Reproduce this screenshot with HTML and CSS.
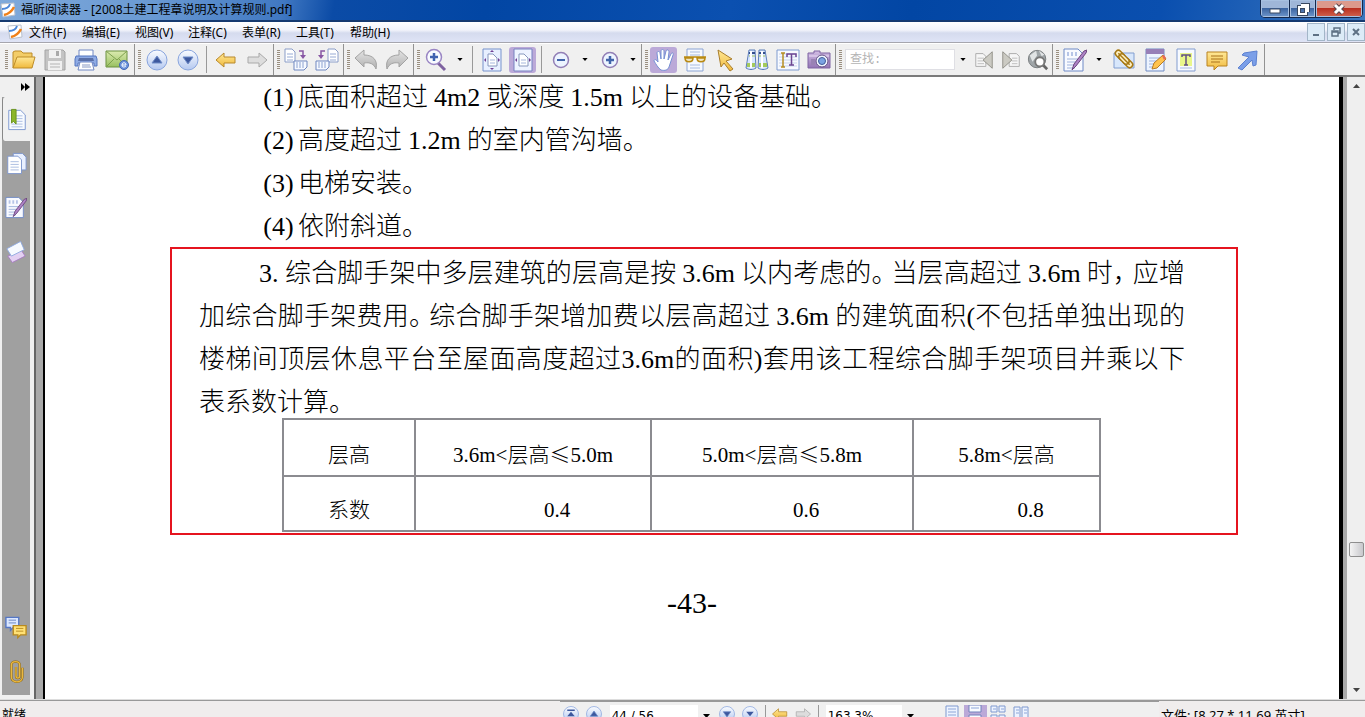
FILE: index.html
```html
<!DOCTYPE html>
<html lang="zh-CN">
<head>
<meta charset="utf-8">
<title>福昕阅读器 - [2008土建工程章说明及计算规则.pdf]</title>
<link rel="stylesheet" href="styles.css">
</head>
<body>
<svg class="defs" aria-hidden="true">
  <defs>
    <linearGradient id="gBlue" x1="0" y1="0" x2="0" y2="1"><stop offset="0" stop-color="#fafcff"/><stop offset="1" stop-color="#b4c8f0"/></linearGradient>
    <linearGradient id="gGold" x1="0" y1="0" x2="0" y2="1"><stop offset="0" stop-color="#ffe896"/><stop offset="1" stop-color="#f0b93c"/></linearGradient>
    <linearGradient id="gGray" x1="0" y1="0" x2="0" y2="1"><stop offset="0" stop-color="#e4e4e4"/><stop offset="1" stop-color="#b0b0b0"/></linearGradient>
    <linearGradient id="gPurple" x1="0" y1="0" x2="0" y2="1"><stop offset="0" stop-color="#d2bde4"/><stop offset="1" stop-color="#9274b4"/></linearGradient>
    <linearGradient id="gGreen" x1="0" y1="0" x2="0" y2="1"><stop offset="0" stop-color="#dcebb0"/><stop offset="1" stop-color="#98c060"/></linearGradient>
  </defs>
  <symbol id="logo" viewBox="0 0 16 16"><path d="M1 2l13-1 1 12-12 2z" fill="#fff" stroke="#b8c0cc"/><path d="M2 7c5 0 7-2 8-5" fill="none" stroke="#4a86d8" stroke-width="2"/><path d="M4 13c5-1 8-4 10-8" fill="none" stroke="#f08018" stroke-width="2.5"/></symbol>
  <symbol id="open" viewBox="0 0 24 24"><path d="M1 20V4l2-1h6l2 2h9v4" fill="#f3cd68" stroke="#bd8c28"/><path d="M1 20L5 9h18l-3 11z" fill="url(#gGold)" stroke="#bd8c28"/></symbol>
  <symbol id="save" viewBox="0 0 24 24"><path d="M2 2h18l2 2v18H2z" fill="#c4c4c4" stroke="#a4a4a4"/><path d="M6 2h12v8H6z" fill="#f0f0f0"/><path d="M13 3h3v5h-3z" fill="#a9a9a9"/><path d="M5 13h14v9H5z" fill="#f0f0f0"/><path d="M7 16h10M7 19h10" stroke="#b4b4b4"/></symbol>
  <symbol id="print" viewBox="0 0 24 24"><path d="M5 8V2h14v6" fill="#fff" stroke="#7088c4"/><path d="M2 8h20l1 3v7h-3v-3H4v3H1v-7z" fill="#8fabe4" stroke="#5577c0"/><path d="M5 10h14l1 3H4z" fill="#5a70a8"/><path d="M6 14h12l2 8H4z" fill="#fff" stroke="#7088c4"/><path d="M8 17h8M8 19h9" stroke="#8899c4"/></symbol>
  <symbol id="mail" viewBox="0 0 24 24"><path d="M1 3h21v16H1z" fill="url(#gGreen)" stroke="#6b9040"/><path d="M1 3l11 9L22 3M1 19l8-8M14 11l8 8" fill="none" stroke="#7da04e"/><circle cx="19" cy="17" r="4.500" fill="#6d94dc" stroke="#4468b4"/><path d="M17 17h4c0-3-4-3-4 0s3 2 4 1" fill="none" stroke="#fff"/></symbol>
  <symbol id="up" viewBox="0 0 24 24"><circle cx="12" cy="12" r="10" fill="url(#gBlue)" stroke="#89a5de"/><path d="M7 15l5-7 5 7z" fill="#3d589e" stroke="#6f8cc8"/></symbol>
  <symbol id="down" viewBox="0 0 24 24"><circle cx="12" cy="12" r="10" fill="url(#gBlue)" stroke="#89a5de"/><path d="M7 9l5 7 5-7z" fill="#3d589e" stroke="#6f8cc8"/></symbol>
  <symbol id="first" viewBox="0 0 24 24"><circle cx="12" cy="12" r="10" fill="url(#gBlue)" stroke="#89a5de"/><path d="M7 6h10v2H7zM7 15l5-6 5 6z" fill="#3d589e"/></symbol>
  <symbol id="last" viewBox="0 0 24 24"><circle cx="12" cy="12" r="10" fill="url(#gBlue)" stroke="#89a5de"/><path d="M7 17h10v2H7zM7 9l5 6 5-6z" fill="#3d589e"/></symbol>
  <symbol id="back" viewBox="0 0 24 24"><path d="M2 12l8-7v4h11v6H10v4z" fill="url(#gGold)" stroke="#b8892c"/></symbol>
  <symbol id="forward" viewBox="0 0 24 24"><path d="M22 12l-8-7v4H3v6h11v4z" fill="#ddd" stroke="#a9a9a9"/></symbol>
  <symbol id="copyr" viewBox="0 0 24 24"><path d="M1 1h7l3 3v10H1z" fill="#fff" stroke="#8a9dc8"/><path d="M3 6h6M3 9h6M3 12h6" stroke="#98abd4"/><path d="M15 3h4v5" fill="none" stroke="#8857a4" stroke-width="1.500"/><path d="M16 7h6l-3 4z" fill="#8857a4"/><path d="M10 13h13v6l-3 3H10z" fill="#f6f9ff" stroke="#6f87c0"/><path d="M13 14v6M16 14v6M19 14v6" stroke="#8ca2d0"/></symbol>
  <symbol id="copyl" viewBox="0 0 24 24"><path d="M13 1h7l3 3v10H13z" fill="#fff" stroke="#8a9dc8"/><path d="M15 6h6M15 9h6M15 12h6" stroke="#98abd4"/><path d="M10 3H6v5" fill="none" stroke="#8857a4" stroke-width="1.500"/><path d="M3 7h6l-3 4z" fill="#8857a4"/><path d="M1 13h13v6l-3 3H1z" fill="#f6f9ff" stroke="#6f87c0"/><path d="M4 14v6M7 14v6M10 14v6" stroke="#8ca2d0"/></symbol>
  <symbol id="undo" viewBox="0 0 24 24"><path d="M1 10l9-8v5c9 0 14 5 12 14-2-5-6-7-12-6v4z" fill="url(#gGray)" stroke="#a3a3a3"/></symbol>
  <symbol id="redo" viewBox="0 0 24 24"><path d="M23 10l-9-8v5C5 7 0 12 2 21c2-5 6-7 12-6v4z" fill="url(#gGray)" stroke="#a3a3a3"/></symbol>
  <symbol id="zoom" viewBox="0 0 24 24"><path d="M14 15l7 7" stroke="#7e62a0" stroke-width="3"/><circle cx="10" cy="9" r="7.500" fill="#f8fbff" stroke="#9a86c4" stroke-width="1.500"/><path d="M6 9h8M10 5v8" stroke="#4063b0" stroke-width="2.500"/></symbol>
  <symbol id="fitpage" viewBox="0 0 24 24"><path d="M3 1h18v22H3z" fill="#e8f0ff" stroke="#7792cc"/><path d="M8 6h5l4 4v8H8z" fill="#fff" stroke="#8797bd"/><path d="M10 12h5M10 15h5" stroke="#a6b7dc"/><path d="M12 2l2 2h-4zM12 22l2-2h-4zM4 12l2-2v4zM20 12l-2-2v4z" fill="#714094"/></symbol>
  <symbol id="fitwidth" viewBox="0 0 24 24"><path d="M3 1h18v22H3z" fill="#eef3ff" stroke="#7781c0"/><path d="M8 6h5l4 4v8H8z" fill="#fff" stroke="#8797bd"/><path d="M10 12h5M10 15h5" stroke="#a6b7dc"/><path d="M4 12l2-2v4zM20 12l-2-2v4z" fill="#714094"/></symbol>
  <symbol id="minus" viewBox="0 0 24 24"><circle cx="12" cy="12" r="7.500" fill="#edf4ff" stroke="#927fb6" stroke-width="1.500"/><path d="M8 12h8" stroke="#4164aa" stroke-width="2"/></symbol>
  <symbol id="plus" viewBox="0 0 24 24"><circle cx="12" cy="12" r="7.500" fill="#edf4ff" stroke="#927fb6" stroke-width="1.500"/><path d="M8 12h8M12 8v8" stroke="#4164aa" stroke-width="2.500"/></symbol>
  <symbol id="hand" viewBox="0 0 24 24"><path d="M9 22C6 20 4 16 2 13c0-2 2-2 4 1L5 5c0-2 3-2 3 0l1 6V3c0-2 3-2 3 0v8l2-8c1-2 3-1 3 1l-1 8 3-6c1-2 3-1 2 1l-4 12c-1 3-4 4-8 3z" fill="#fff" stroke="#7690d4"/></symbol>
  <symbol id="read" viewBox="0 0 24 24"><path d="M4 1h16v22H4z" fill="#f6f9ff" stroke="#8ba4d4"/><path d="M7 4h10M7 7h10M7 17h10M7 20h10" stroke="#a9bce0"/><path d="M1 9h22M2 10c0 5 8 5 8 0zM14 10c0 5 8 5 8 0z" fill="#efe6c5" stroke="#b98912" stroke-width="1.500"/></symbol>
  <symbol id="cursor" viewBox="0 0 24 24"><path d="M4 2l14 9-6 2 7 8-3 2-6-8-3 4z" fill="url(#gGold)" stroke="#a97d2c"/></symbol>
  <symbol id="bino" viewBox="0 0 24 24"><path d="M4 2h6l1 18c-3 2-7 2-10 0zM14 2h6l3 18c-3 2-7 2-10 0z" fill="#d8e6ff" stroke="#5b7cb7"/><path d="M4 5h6M14 5h6" stroke="#344e8c" stroke-width="2"/><path d="M2 17h8M14 17h8" stroke="#a4ca5c" stroke-width="4"/><path d="M4 8h6M14 8h6" stroke="#a4ca5c"/><path d="M6 3v17M17 3v17" stroke="#fff" stroke-width="2"/></symbol>
  <symbol id="textsel" viewBox="0 0 24 24"><path d="M1 2h22v20H1z" fill="#f8faff" stroke="#7e9bd0"/><path d="M3 6h18M3 9h18M3 12h18M3 15h18M3 18h18" stroke="#c7d4ed"/><path d="M5 5h4M5 19h4M7 5v14" stroke="#b78e22" stroke-width="1.500"/><path d="M11 9V6h9v3M15.500 6v11M13 17h5" fill="none" stroke="#6c4692" stroke-width="1.500"/></symbol>
  <symbol id="camera" viewBox="0 0 24 24"><path d="M1 5h6V3h6v2h10v15H1z" fill="url(#gPurple)" stroke="#7f64a3"/><path d="M2 8h20" stroke="#eadcf5"/><path d="M4 11h4v6H4z" fill="#9982b4"/><circle cx="15" cy="13" r="6" fill="#eef5ff" stroke="#645083"/><circle cx="15" cy="13" r="3.500" fill="#7aa3e2" stroke="#415c98"/></symbol>
  <symbol id="prev" viewBox="0 0 24 24"><path d="M3 5h8l3 3v11H3z" fill="#f6f6f6" stroke="#aaa"/><path d="M5 10h7M5 13h7M5 16h7" stroke="#bbb"/><path d="M21 3v18l-10-9z" fill="#cbcac3" stroke="#8e8d86"/></symbol>
  <symbol id="next" viewBox="0 0 24 24"><path d="M10 5h8l3 3v11H10z" fill="#f6f6f6" stroke="#aaa"/><path d="M13 10h6M13 13h6M13 16h6" stroke="#bbb"/><path d="M3 3v18l10-9z" fill="#cbcac3" stroke="#8e8d86"/></symbol>
  <symbol id="web" viewBox="0 0 24 24"><circle cx="11" cy="11" r="9.500" fill="#9fa5a8" stroke="#737779"/><path d="M3 7l7-5 1 5-5 7zM13 2l6 4-3 2z" fill="#e1e4e5"/><path d="M17 17l5 5" stroke="#666" stroke-width="3"/><circle cx="14" cy="14" r="5" fill="#fff" stroke="#777" stroke-width="2"/></symbol>
  <symbol id="sign" viewBox="0 0 24 24"><path d="M1 1h14l5 5v17H1z" fill="#f8faff" stroke="#6f8ac6"/><path d="M4 4h2v4H4zM8 4h2v4H8zM12 4h2v4h-2z" fill="#b6c5e7"/><path d="M4 11h12M4 14h10M4 17h8M4 20h8" stroke="#9eb2dc"/><path d="M9 22l2-6L21 3l3-1-1 3-10 13z" fill="#ad83c6" stroke="#6d467e"/></symbol>
  <symbol id="link" viewBox="0 0 24 24"><path d="M2 5h20v15H2z" fill="#d8e7fb" stroke="#819ed0"/><g fill="#fff2c5" stroke="#a77913" stroke-width="1.500" transform="rotate(45 12 11)"><rect x="1" y="8" width="11" height="6" rx="3"/><rect x="12" y="8" width="11" height="6" rx="3"/><rect x="6" y="8" width="12" height="6" rx="3"/><path d="M4 11h16"/></g></symbol>
  <symbol id="pencil" viewBox="0 0 24 24"><path d="M3 1h18v22H3z" fill="#edf4ff" stroke="#6f8bc2"/><path d="M3 1h18v5H3z" fill="#9780b8"/><path d="M6 10h12M6 13h12M6 16h9M6 19h7" stroke="#9eb2dc"/><path d="M9 21l2-6 9-8 3 4-9 9z" fill="#ffc34d" stroke="#b77c26"/><path d="M19 8l2-1 2 3-2 2z" fill="#e76a58"/></symbol>
  <symbol id="typew" viewBox="0 0 24 24"><path d="M3 1h18v22H3z" fill="#f7faff" stroke="#829cd0"/><path d="M6 5h12v13H6z" fill="#e9f78b"/><path d="M8 9V7h8v2M12 7v10M10 17h4" fill="none" stroke="#615082" stroke-width="1.500"/><path d="M6 20h12" stroke="#a9bce0"/></symbol>
  <symbol id="note" viewBox="0 0 24 24"><path d="M2 4h20v14H13l-4 4v-4H2z" fill="url(#gGold)" stroke="#b9821e"/><path d="M6 8h12M6 11h12M6 14h9" stroke="#a9731c"/></symbol>
  <symbol id="arrow" viewBox="0 0 24 24"><path d="M2 20L13 9 6 7l2-2 13-2-1 14-3 1-1-6L6 22z" fill="#7b9fe8" stroke="#5b80d0"/></symbol>
  <symbol id="bookmark" viewBox="0 0 24 24"><path d="M3 2h13l5 5v16H3z" fill="#f8fbff" stroke="#7894ce"/><path d="M6 8h12M6 11h12M6 14h12M6 17h12M6 20h12" stroke="#a6badf"/><path d="M6 1h5v16l-3-3-2 2z" fill="#8bb62a" stroke="#68901d"/></symbol>
  <symbol id="pages" viewBox="0 0 24 24"><path d="M9 1h10l4 4v14H9z" fill="#e9f0ff" stroke="#7b94cd"/><path d="M3 4h11l4 4v15H3z" fill="#fff" stroke="#7b94cd"/><path d="M6 10h9M6 13h9M6 16h9M6 19h9" stroke="#a6badf"/></symbol>
  <symbol id="layers" viewBox="0 0 24 24"><path d="M3 17l15-6 4 6-14 7z" fill="#e3d0f2" stroke="#a67cc1"/><path d="M2 9l15-8 4 9-14 7z" fill="#f7faff" stroke="#8ea9df"/></symbol>
  <symbol id="comments" viewBox="0 0 24 24"><path d="M1 1h14v11H9l-3 3v-3H1z" fill="#dbe7ff" stroke="#5577c6" stroke-width="1.500"/><path d="M4 4h8M4 7h8" stroke="#6482bf"/><path d="M9 10h14v10h-6l-3 3v-3H9z" fill="#ffe176" stroke="#b88a1f" stroke-width="1.500"/><path d="M12 13h8M12 16h8" stroke="#b88a1f"/></symbol>
  <symbol id="clip" viewBox="0 0 24 24"><path d="M12 7v10c0 3 4 3 4 0V5c0-5-9-5-9 0v13c0 7 12 7 12 0V8" fill="none" stroke="#8c6510" stroke-width="2.500"/><path d="M12 7v10c0 3 4 3 4 0V5c0-5-9-5-9 0v13c0 7 12 7 12 0V8" fill="none" stroke="#eab83f" stroke-width="1.500"/></symbol>
  <symbol id="tri" viewBox="0 0 7 4"><path d="M0 0h7L3.500 4z"/></symbol>
  <symbol id="single" viewBox="0 0 16 18"><path d="M2 1h12v16H2z" fill="#edf3ff" stroke="#7f99cf"/><path d="M4 4h8M4 7h8M4 10h8" stroke="#8da6d8"/></symbol>
  <symbol id="cont" viewBox="0 0 16 18"><path d="M2 0h12v7H2zM2 10h12v8H2z" fill="#f8fbff" stroke="#7381bb"/><path d="M4 3h8M4 13h8" stroke="#8da6d8"/></symbol>
  <symbol id="facing" viewBox="0 0 16 18"><path d="M1 2h6v14H1zM9 2h6v14H9z" fill="#edf3ff" stroke="#7f99cf"/><path d="M3 5h3M3 8h3M11 5h3M11 8h3" stroke="#8da6d8"/></symbol>
  <symbol id="quad" viewBox="0 0 16 18"><path d="M1 1h6v6H1zM9 1h6v6H9zM1 10h6v7H1zM9 10h6v7H9z" fill="#edf3ff" stroke="#7f99cf"/><path d="M3 4h3M11 4h3" stroke="#8da6d8"/></symbol>
</svg>

<div class="window">
  <header class="titlebar">
    <svg class="logo"><use href="#logo"/></svg>
    <h1 class="title">福昕阅读器 - [2008土建工程章说明及计算规则.pdf]</h1>
    <div class="winbtns">
      <button class="wb" aria-label="最小化"><svg width="14" height="14" viewBox="0 0 14 14"><path d="M2 7h10v4H2z" fill="#fff" stroke="#3c4c66"/></svg></button>
      <button class="wb wb-mid" aria-label="还原"><svg width="14" height="14" viewBox="0 0 14 14"><path d="M5 3h7v7M3 5h7v7H3z" fill="none" stroke="#38475f" stroke-width="4"/><path d="M5 3h7v7M3 5h7v7H3z" fill="none" stroke="#fff" stroke-width="2"/></svg></button>
      <button class="wb wb-close" aria-label="关闭"><svg width="14" height="14" viewBox="0 0 14 14"><path d="M3 3l8 8M11 3l-8 8" stroke="#58444c" stroke-width="5"/><path d="M3 3l8 8M11 3l-8 8" stroke="#fff" stroke-width="3"/></svg></button>
    </div>
  </header>

  <nav class="menubar">
    <svg class="logo"><use href="#logo"/></svg>
    <button class="menu">文件(F)</button><button class="menu">编辑(E)</button><button class="menu">视图(V)</button><button class="menu menu-w">注释(C)</button><button class="menu menu-w">表单(R)</button><button class="menu menu-w">工具(T)</button><button class="menu menu-w">帮助(H)</button>
    <div class="docbtns">
      <button class="db" aria-label="最小化文档"><svg width="10" height="10" viewBox="0 0 10 10"><path d="M2 8h6" stroke="#5e7184" stroke-width="2"/></svg></button>
      <button class="db" aria-label="还原文档"><svg width="10" height="10" viewBox="0 0 10 10"><path d="M3 3V1h6v5H7M1 4h6v5H1zM1 5h6" fill="none" stroke="#5e7184" stroke-width="1.500"/></svg></button>
      <button class="db" aria-label="关闭文档"><svg width="10" height="10" viewBox="0 0 10 10"><path d="M2 2l6 6M8 2l-6 6" stroke="#5e7184" stroke-width="2"/></svg></button>
    </div>
  </nav>

  <div class="toolbar">
    <div class="group"><i class="grip"></i><button class="tool" aria-label="打开"><svg><use href="#open"/></svg></button><button class="tool" aria-label="保存"><svg><use href="#save"/></svg></button><button class="tool" aria-label="打印"><svg><use href="#print"/></svg></button><button class="tool" aria-label="邮件"><svg><use href="#mail"/></svg></button></div>
    <div class="group"><i class="grip"></i><button class="tool" aria-label="上一页"><svg><use href="#up"/></svg></button><button class="tool" aria-label="下一页"><svg><use href="#down"/></svg></button><i class="rule"></i><button class="tool" aria-label="后退"><svg><use href="#back"/></svg></button><button class="tool" aria-label="前进"><svg><use href="#forward"/></svg></button></div>
    <div class="group"><i class="grip"></i><button class="tool" aria-label="向右旋转"><svg><use href="#copyr"/></svg></button><button class="tool" aria-label="向左旋转"><svg><use href="#copyl"/></svg></button></div>
    <div class="group"><i class="grip"></i><button class="tool" aria-label="撤销"><svg><use href="#undo"/></svg></button><button class="tool" aria-label="重做"><svg><use href="#redo"/></svg></button></div>
    <div class="group"><i class="grip"></i><button class="tool" aria-label="缩放工具"><svg><use href="#zoom"/></svg></button><button class="drop" aria-label="缩放选项"><svg><use href="#tri"/></svg></button><i class="rule"></i><button class="tool" aria-label="适合页面"><svg><use href="#fitpage"/></svg></button><button class="tool on" aria-label="适合宽度"><svg><use href="#fitwidth"/></svg></button><i class="rule"></i><button class="tool" aria-label="缩小"><svg><use href="#minus"/></svg></button><button class="drop" aria-label="缩小选项"><svg><use href="#tri"/></svg></button><button class="tool" aria-label="放大"><svg><use href="#plus"/></svg></button><button class="drop drop-end" aria-label="放大选项"><svg><use href="#tri"/></svg></button></div>
    <div class="group"><i class="grip"></i><button class="tool on" aria-label="手型工具"><svg><use href="#hand"/></svg></button><button class="tool" aria-label="阅读模式"><svg><use href="#read"/></svg></button><button class="tool" aria-label="选择标注"><svg><use href="#cursor"/></svg></button><button class="tool" aria-label="查找"><svg><use href="#bino"/></svg></button><button class="tool" aria-label="选择文本"><svg><use href="#textsel"/></svg></button><button class="tool" aria-label="快照"><svg><use href="#camera"/></svg></button></div>
    <div class="group"><i class="grip"></i><input class="search" type="text" placeholder="查找:" aria-label="查找文本"><button class="drop drop-end" aria-label="查找选项"><svg><use href="#tri"/></svg></button><button class="tool tool-s" aria-label="查找上一个"><svg><use href="#prev"/></svg></button><button class="tool tool-s" aria-label="查找下一个"><svg><use href="#next"/></svg></button><button class="tool tool-s" aria-label="网络搜索"><svg><use href="#web"/></svg></button></div>
    <div class="group"><i class="grip"></i><button class="tool" aria-label="签名"><svg><use href="#sign"/></svg></button><button class="drop" aria-label="签名选项"><svg><use href="#tri"/></svg></button><button class="tool" aria-label="链接"><svg><use href="#link"/></svg></button><button class="tool" aria-label="编辑表单"><svg><use href="#pencil"/></svg></button><button class="tool" aria-label="打字机"><svg><use href="#typew"/></svg></button><button class="tool" aria-label="注释"><svg><use href="#note"/></svg></button><button class="tool" aria-label="箭头"><svg><use href="#arrow"/></svg></button></div>
  </div>

  <div class="workspace">
    <aside class="side">
      <button class="expand" aria-label="展开面板"><svg width="9" height="8" viewBox="0 0 9 8"><path d="M0 0l4 4-4 4zM4 0l5 4-5 4z"/></svg></button>
      <div class="tabs">
        <button class="tab tab-on" aria-label="书签"><svg><use href="#bookmark"/></svg></button>
        <button class="tab" aria-label="页面"><svg><use href="#pages"/></svg></button>
        <button class="tab" aria-label="签名面板"><svg><use href="#sign"/></svg></button>
        <button class="tab" aria-label="图层"><svg><use href="#layers"/></svg></button>
        <span class="fill"></span>
        <button class="tab" aria-label="注释面板"><svg><use href="#comments"/></svg></button>
        <button class="tab" aria-label="附件"><svg><use href="#clip"/></svg></button>
      </div>
    </aside>
    <main class="page">
      <article class="content">
        <div class="list">
          <p class="line item"><span class="lat mark">(1)</span>底面积超过<span class="lat gap">4m2</span>或深度<span class="lat gap">1.5m</span>以上的设备基础。</p>
          <p class="line item"><span class="lat mark">(2)</span>高度超过<span class="lat gap">1.2m</span>的室内管沟墙。</p>
          <p class="line item"><span class="lat mark">(3)</span>电梯安装。</p>
          <p class="line item"><span class="lat mark">(4)</span>依附斜道。</p>
        </div>
        <section class="marked">
          <p class="line item full"><span class="lat num">3.</span>综合脚手架中多层建筑的层高是按<span class="lat gap">3.6m</span>以内考虑的<span class="punct">。</span>当层高超过<span class="lat gap">3.6m</span>时<span class="punct">，</span>应增</p>
          <p class="line full">加综合脚手架费用<span class="punct">。</span>综合脚手架增加费以层高超过<span class="lat gap">3.6m</span>的建筑面积<span class="lat">(</span>不包括单独出现的</p>
          <p class="line full">楼梯间顶层休息平台至屋面高度超过<span class="lat">3.6m</span>的面积<span class="lat">)</span>套用该工程综合脚手架项目并乘以下</p>
          <p class="line">表系数计算。</p>
          <table class="factors">
            <colgroup><col class="c1"><col class="c2"><col class="c3"><col class="c4"></colgroup>
            <tr><th scope="row">层高</th><td><span class="tl">3.6m&lt;</span>层高≤<span class="tl">5.0m</span></td><td><span class="tl">5.0m&lt;</span>层高≤<span class="tl">5.8m</span></td><td><span class="tl">5.8m&lt;</span>层高</td></tr>
            <tr class="vals"><th scope="row">系数</th><td><span class="tl">0.4</span></td><td><span class="tl">0.6</span></td><td><span class="tl">0.8</span></td></tr>
          </table>
        </section>
        <p class="folio">-43-</p>
      </article>
    </main>
    <div class="scroll">
      <button class="sb" aria-label="向上滚动"><svg width="7" height="4" viewBox="0 0 7 4"><path d="M0 4h7L3.500 0z" fill="#444"/></svg></button>
      <span class="track-a"></span><span class="thumb"></span><span class="track-b"></span>
      <button class="sb" aria-label="向下滚动"><svg width="7" height="4"><use href="#tri" fill="#444"/></svg></button>
    </div>
  </div>

  <footer class="status">
    <span class="ready">就绪</span>
    <div class="pager">
      <button class="sbtn" aria-label="首页"><svg><use href="#first"/></svg></button><button class="sbtn" aria-label="上一页"><svg><use href="#up"/></svg></button>
      <input class="sfield" value="44 / 56" aria-label="页码"><button class="sdrop" aria-label="选择页码"><svg><use href="#tri"/></svg></button>
      <button class="sbtn" aria-label="下一页"><svg><use href="#down"/></svg></button><button class="sbtn" aria-label="末页"><svg><use href="#last"/></svg></button>
      <i class="srule"></i>
      <button class="sbtn" aria-label="后退"><svg><use href="#back"/></svg></button><button class="sbtn" aria-label="前进"><svg><use href="#forward"/></svg></button>
      <i class="srule"></i>
      <input class="sfield sfield-s" value="163.3%" aria-label="缩放比例"><button class="sdrop" aria-label="选择比例"><svg><use href="#tri"/></svg></button>
      <div class="views"><button class="sbtn" aria-label="单页"><svg><use href="#single"/></svg></button><button class="sbtn on" aria-label="连续"><svg><use href="#cont"/></svg></button><button class="sbtn" aria-label="连续对开"><svg><use href="#quad"/></svg></button><button class="sbtn" aria-label="对开"><svg><use href="#facing"/></svg></button></div>
    </div>
    <span class="size">文件: [8.27 * 11.69 英寸]</span>
  </footer>
</div>
</body>
</html>
```
FILE: styles.css
```css
* { box-sizing: border-box; }
body { margin: 0; font: 12px "Noto Sans", "Noto Sans CJK SC", sans-serif; color: #000; }
button { padding: 0; border: 0; background: none; font: inherit; color: inherit; display: flex; align-items: center; justify-content: center; flex: none; }
p, h1 { margin: 0; }
.defs { position: absolute; width: 0; height: 0; }
.window { display: flex; flex-direction: column; height: 100vh; overflow: hidden; background: #f0f0f0; }

.titlebar { display: flex; align-items: center; height: 22px; flex: none; background: linear-gradient(100deg, #7fa9da 0, #6a9ad3 150px, #4078c2 280px, #0b4ba6 330px, #0246a4 480px, #0b50b0 720px, #0246a4 900px, #0a4faf 85%, #3a76bf 100%); border-bottom: 2px solid #153a70; }
.logo { width: 16px; height: 16px; flex: none; margin-right: 5px; }
.title { flex: 1; font-size: 12px; font-weight: normal; line-height: 20px; white-space: nowrap; }
.winbtns { display: flex; align-self: flex-start; margin-right: 2px; border: 1px solid #14284c; border-top: 0; border-radius: 0 0 5px 5px; overflow: hidden; }
.wb { width: 28px; height: 17px; background: linear-gradient(#9fb6d8 45%, #3c64a0 50%, #6f97cc); box-shadow: inset 0 0 0 1px #a8c0e0; }
.wb-mid { width: 27px; border-left: 1px solid #14284c; border-right: 1px solid #14284c; }
.wb-close { width: 46px; background: linear-gradient(#dc9a8c 45%, #b93020 50%, #cf6450); }

.menubar { display: flex; align-items: center; height: 21px; flex: none; padding-left: 7px; background: linear-gradient(#fff 0, #f2f4fb 8px, #d5dbee 11px, #dfe4f6 100%); border-bottom: 1px solid #a6a6ae; }
.menubar .logo { margin-right: 4px; }
.menu { width: 53px; height: 18px; padding-left: 2px; justify-content: flex-start; white-space: nowrap; }
.menu-w { width: 54px; }
.docbtns { display: flex; gap: 2px; margin-left: auto; }
.db { width: 18px; height: 18px; background: #dcebf7; border: 1px solid #a3b6c8; }

.toolbar { display: flex; height: 34px; flex: none; background: #f0f0f0; border-top: 1px solid #fff; border-bottom: 2px solid #7b7b7b; }
.group { display: flex; align-items: center; flex: none; padding: 0 1px 0 3px; border-right: 1px solid #929292; }
.group:first-child { padding: 0 2px 0 5px; }
.grip { width: 3px; height: 20px; background: repeating-linear-gradient(#9a8f80 0 1px, #f0f0f0 1px 2px); }
.rule { width: 1px; height: 27px; margin: 0 3px; background: #999; }
.tool { width: 31px; height: 26px; border-radius: 3px; }
.tool svg { width: 24px; height: 24px; }
.tool-s { width: 27px; }
.tool-s svg { width: 22px; height: 22px; }
.tool.on { width: 27px; margin: 0 2px; }
.on { background: #bba9d8; }
.drop { width: 18px; height: 26px; }
.drop svg { width: 6px; height: 3px; }
.drop-end { width: 15px; }
.search { width: 110px; height: 21px; margin-left: 3px; padding: 0 4px; border: 1px solid #dfdfe4; font: 12px "Liberation Mono", "Noto Sans CJK SC", monospace; background: #fff; }
.search::placeholder { color: #b4b4b4; opacity: 1; }

.workspace { display: flex; flex: 1; min-height: 0; }
.side { display: flex; flex-direction: column; width: 45px; flex: none; padding: 0 0 4px 2px; background: linear-gradient(90deg, #f0f0f0 34px, #666 34px 36px, #a9a9a9 36px 43px, #000 43px); }
.expand { width: 28px; height: 20px; flex: none; padding-left: 18px; }
.tabs { display: flex; flex-direction: column; flex: 1; width: 28px; padding-bottom: 2px; background: #a0a0a0; }
.tab { width: 28px; height: 44px; }
.tab svg { width: 22px; height: 25px; }
.tab-on { background: #f0f0f0; border-radius: 3px 0 0 3px; border-left: 1px solid #888; }
.fill { flex: 1; }
.page { flex: 1; min-width: 0; overflow: hidden; background: #fff; border-right: 4px solid #000; }
.content { width: 986px; margin: 0 auto; font-size: 26px; font-weight: 300; font-family: "Noto Sans CJK SC", sans-serif; }
.list { height: 172px; margin-top: -4px; }
.line { line-height: 43px; white-space: nowrap; }
.item { padding-left: 60px; }
.full { text-align: justify; text-align-last: justify; }
.lat { font: 26px "Liberation Serif", serif; }
.mark { display: inline-block; width: 39px; text-align: center; text-align-last: center; }
.num { display: inline-block; width: 26px; text-align-last: left; }
.gap { margin: 0 6px; }
.punct { margin-right: 7px; font-feature-settings: "halt"; }
.marked { margin: 2px -53px 0 -29px; padding: 0 51px 0 27px; height: 288px; border: 2px solid #e5141f; }
.factors { width: 819px; margin-left: 83px; margin-top: -3px; table-layout: fixed; border-collapse: collapse; font-size: 21px; line-height: 30px; text-align: center; }
.c1 { width: 132px; }
.c2 { width: 236px; }
.c3 { width: 262px; }
.factors th, .factors td { height: 57px; padding: 11px 0 0; border: 2px solid #8b8b90; font-weight: 300; }
.factors .vals th, .factors .vals td { height: 55px; padding-top: 9px; }
.factors .vals td { padding-left: 48px; }
.tl { font: 21px "Liberation Serif", serif; }
.folio { margin-top: 50px; font: 30px/36px "Liberation Serif", serif; text-align: center; }

.scroll { display: flex; flex-direction: column; align-items: center; width: 22px; flex: none; border-left: 4px solid #a9a9a9; background: #efefef; }
.sb { width: 17px; height: 18px; }
.track-a { flex: 448; }
.track-b { flex: 124; }
.thumb { width: 15px; height: 15px; border: 1px solid #8e8e8e; border-radius: 2px; background: linear-gradient(90deg, #f4f4f4, #c8c8cc); }

.status { display: grid; grid-template-columns: 41% 1fr 206px; height: 18px; flex: none; overflow: hidden; border-top: 1px solid #ddd; background: #f0eded; }
.ready, .size { padding: 5px 2px 0; border-top: 1px solid #999; font-size: 13px; line-height: 18px; white-space: nowrap; }
.ready { font-size: 12px; }
.pager { display: flex; align-items: flex-start; padding-top: 3px; border-top: 2px solid #999; background: #f0f0f0; }
.sbtn { width: 23px; height: 18px; }
.sbtn svg { width: 18px; height: 18px; }
.sfield { width: 88px; height: 22px; margin-left: 4px; padding: 0 2px; border: 0; background: #fff; font: 12px/18px "DejaVu Sans", sans-serif; }
.sfield-s { width: 76px; }
.sdrop { width: 18px; height: 22px; }
.sdrop svg { width: 7px; height: 4px; }
.srule { width: 1px; height: 18px; margin: 0 3px; background: #999; }
.views { display: flex; margin-left: 21px; }
```
